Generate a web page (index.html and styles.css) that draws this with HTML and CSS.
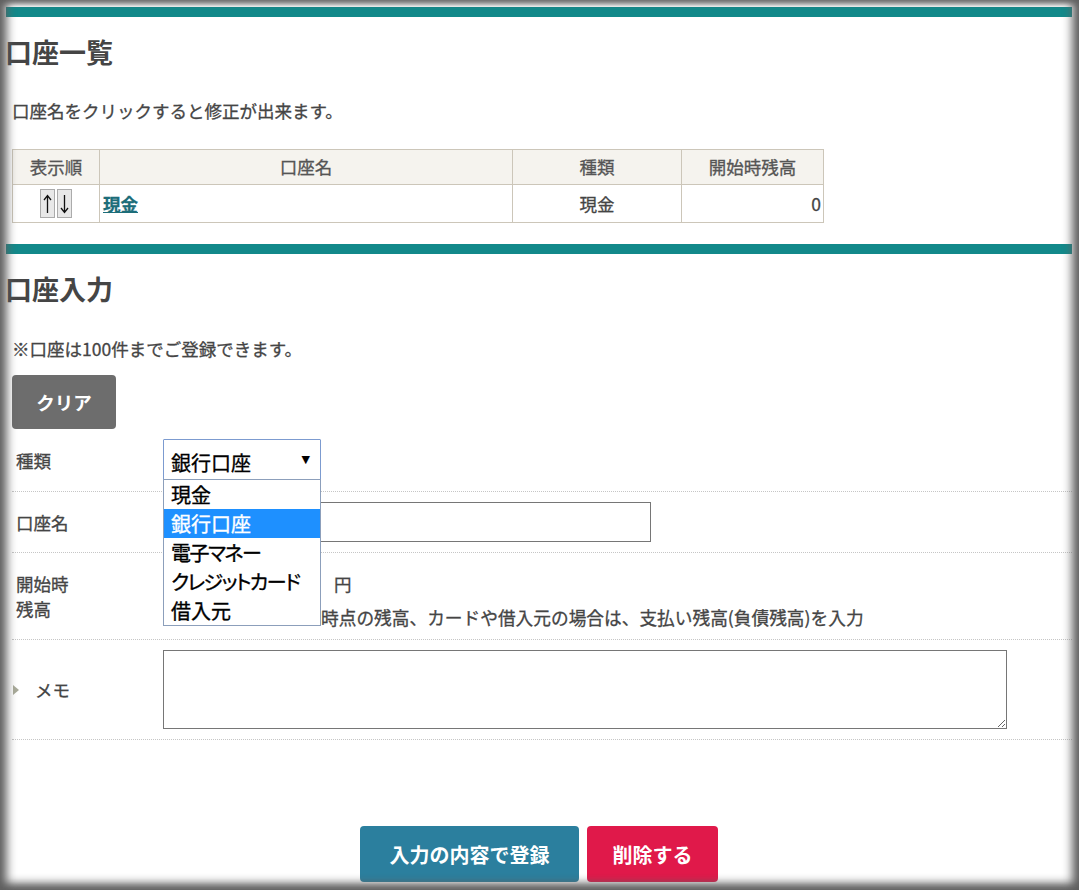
FILE: index.html
```html
<!DOCTYPE html>
<html lang="ja">
<head>
<meta charset="utf-8">
<title>口座</title>
<link rel="stylesheet" href="styles.css">
</head>
<body>
<div class="page">
  <div class="bar"></div>
  <h2 class="heading">口座一覧</h2>
  <p class="lead">口座名をクリックすると修正が出来ます。</p>
  <table class="list">
    <thead>
      <tr>
        <th class="c-order">表示順</th>
        <th class="c-name">口座名</th>
        <th class="c-type">種類</th>
        <th class="c-bal">開始時残高</th>
      </tr>
    </thead>
    <tbody>
      <tr>
        <td class="c-order">
          <span class="arrows">
            <span class="arrow" title="上へ"><svg width="9" height="22" viewBox="0 0 9 22"><path d="M4.5 2.5V20M1 7L4.5 2.5L8 7" fill="none" stroke="#111" stroke-width="1.3"/></svg></span>
            <span class="arrow" title="下へ"><svg width="9" height="22" viewBox="0 0 9 22"><path d="M4.5 2V19.5M1 15L4.5 19.5L8 15" fill="none" stroke="#111" stroke-width="1.3"/></svg></span>
          </span>
        </td>
        <td class="c-name"><a class="acct-link" href="#">現金</a></td>
        <td class="c-type">現金</td>
        <td class="c-bal">0</td>
      </tr>
    </tbody>
  </table>

  <div class="bar bar-2"></div>
  <h2 class="heading">口座入力</h2>
  <p class="lead lead-2">※口座は100件までご登録できます。</p>
  <button class="btn-clear" type="button">クリア</button>

  <div class="form">
    <div class="row">
      <div class="label-cell"><span class="label">種類</span></div>
      <div class="field">
        <div class="select-wrap">
          <div class="select"><span>銀行口座</span><span class="caret">▼</span></div>
          <ul class="dropdown">
            <li class="opt">現金</li>
            <li class="opt opt-active">銀行口座</li>
            <li class="opt opt-kana">電子マネー</li>
            <li class="opt opt-kana">クレジットカード</li>
            <li class="opt">借入元</li>
          </ul>
        </div>
      </div>
    </div>
    <div class="row">
      <div class="label-cell"><span class="label">口座名</span></div>
      <div class="field"><input class="text-input" type="text"></div>
    </div>
    <div class="row">
      <div class="label-cell"><span class="label">開始時残高</span></div>
      <div class="field">
        <div class="amount-line"><input class="amount-input" type="text"><span class="unit">円</span></div>
        <div class="note">時点の残高、カードや借入元の場合は、支払い残高(負債残高)を入力</div>
      </div>
    </div>
    <div class="row">
      <div class="label-cell"><span class="label label-memo"><span class="tri"></span>メモ</span></div>
      <div class="field"><textarea class="memo"></textarea></div>
    </div>
  </div>

  <div class="actions">
    <button class="btn btn-submit" type="button">入力の内容で登録</button>
    <button class="btn btn-delete" type="button">削除する</button>
  </div>

  <div class="shade"></div>
</div>
</body>
</html>
```

FILE: styles.css
```css
* { box-sizing: border-box; }
html, body { margin: 0; padding: 0; background: #fff; }
body {
  font-family: "Noto Sans CJK JP", "Noto Sans", sans-serif;
  color: #444;
  font-size: 17.5px;
}
.page {
  position: relative;
  width: 1079px;
  height: 890px;
  overflow: hidden;
  padding: 7px 7px 0 6px;
}
.bar { height: 10px; background: #12898a; }
.bar-2 { margin-top: 21px; }
.heading {
  margin: 17px 0 0 -1px;
  font-size: 27px;
  line-height: 36px;
  font-weight: 700;
  color: #454545;
}
.lead {
  margin: 29px 0 0 6px;
  font-size: 17.5px;
  line-height: 24px;
  color: #454545;
  -webkit-text-stroke: 0.3px #454545;
}
.lead-2 { margin-top: 30px; }

.list {
  margin: 26px 0 0 6px;
  border-collapse: collapse;
  width: 811px;
  table-layout: fixed;
}
.list th, .list td {
  border: 1px solid #ccc6b9;
  font-size: 17.5px;
  line-height: 24px;
  padding: 0 3px;
  -webkit-text-stroke: 0.3px currentColor;
}
.list th {
  background: #f5f3ee;
  height: 35px;
  font-weight: 400;
  color: #555;
}
.list td { height: 38px; color: #444; }
.c-order { width: 87px; text-align: center; }
.c-name { width: 413px; }
.list td.c-name { text-align: left; }
.c-type { width: 169px; text-align: center; }
.c-bal { width: 142px; }
.list td.c-bal { text-align: right; padding-right: 2px; }
.arrows { display: inline-flex; gap: 2px; vertical-align: middle; }
.arrow {
  display: inline-flex;
  justify-content: center;
  align-items: center;
  width: 15px;
  height: 29px;
  background: #e8e8e8;
  border: 1px solid #ababab;
}
.arrow svg { display: block; }
.acct-link { color: #1c6d79; font-weight: 700; text-decoration: underline; }

.btn-clear {
  display: block;
  margin: 14px 0 0 6px;
  width: 104px;
  height: 54px;
  background: #6d6d6d;
  color: #fff;
  border: 0;
  border-radius: 4px;
  font-family: inherit;
  font-size: 18.5px;
  font-weight: 700;
}

.form { margin-left: 6px; }
.row {
  display: flex;
  padding: 10px 0;
  border-bottom: 1px dotted #c6c6c6;
}
.label-cell {
  width: 151px;
  flex: none;
  display: flex;
  align-items: center;
  padding-left: 4px;
}
.label {
  width: 56px;
  line-height: 25px;
  font-size: 17.5px;
  color: #454545;
  -webkit-text-stroke: 0.3px #454545;
}
.label-memo { display: flex; align-items: center; margin-left: -3px; width: auto; }
.tri {
  width: 0; height: 0;
  border-left: 6px solid #a9ab9a;
  border-top: 5px solid transparent;
  border-bottom: 5px solid transparent;
  margin-right: 16px;
}
.field { flex: 1; }

.select-wrap { position: relative; width: 158px; }
.select {
  height: 42px;
  border: 1px solid #7c9bd0;
  border-radius: 1px;
  padding: 4px 10px 0 7px;
  display: flex;
  align-items: center;
  justify-content: space-between;
  font-size: 20px;
  color: #000;
  background: #fff;
  -webkit-text-stroke: 0.3px #000;
}
.caret { font-size: 11px; font-family: "DejaVu Sans", sans-serif; margin-top: -6px; -webkit-text-stroke: 0; }
.dropdown {
  position: absolute;
  top: 40px;
  left: 0;
  width: 158px;
  margin: 0;
  padding: 0;
  list-style: none;
  background: #fff;
  border: 1px solid #8c9fbb;
  z-index: 5;
}
.opt {
  height: 29px;
  line-height: 29px;
  padding-left: 7px;
  font-size: 20px;
  color: #000;
  white-space: nowrap;
  font-feature-settings: "palt";
  -webkit-text-stroke: 0.35px currentColor;
}
.opt-kana { letter-spacing: -1.5px; }
.opt-active { background: #1e90ff; color: #fff; }

.text-input {
  display: block;
  width: 488px;
  height: 40px;
  border: 1px solid #767676;
  margin: 0;
}
.amount-line { display: flex; align-items: center; gap: 13px; }
.amount-input {
  display: block;
  width: 158px;
  height: 40px;
  border: 1px solid #767676;
  margin: 0;
}
.unit { font-size: 17.5px; color: #454545; -webkit-text-stroke: 0.3px #454545; }
.note {
  margin-top: 2px;
  padding-left: 158px;
  line-height: 24px;
  font-size: 17.7px;
  color: #454545;
  white-space: nowrap;
  -webkit-text-stroke: 0.3px #454545;
}
.memo {
  display: block;
  width: 844px;
  height: 79px;
  border: 1px solid #767676;
  margin: 0;
  resize: both;
}

.actions {
  margin-top: 86px;
  display: flex;
  justify-content: center;
  gap: 8px;
}
.btn {
  height: 56px;
  border: 0;
  border-radius: 4px;
  color: #fff;
  font-family: inherit;
  font-size: 20px;
  font-weight: 700;
}
.btn-submit { width: 219px; background: #2b7f9e; }
.btn-delete { width: 131px; background: #e0194a; }

.shade {
  position: absolute;
  inset: 0;
  pointer-events: none;
  z-index: 10;
  box-shadow:
    inset 10px 0 10px -3px rgba(95, 95, 95, 0.95),
    inset -10px 0 10px -3px rgba(95, 95, 95, 0.95),
    inset 0 6px 5px -2px rgba(120, 120, 120, 0.95),
    inset 0 -10px 9px -3px rgba(95, 95, 95, 0.95);
}
```
